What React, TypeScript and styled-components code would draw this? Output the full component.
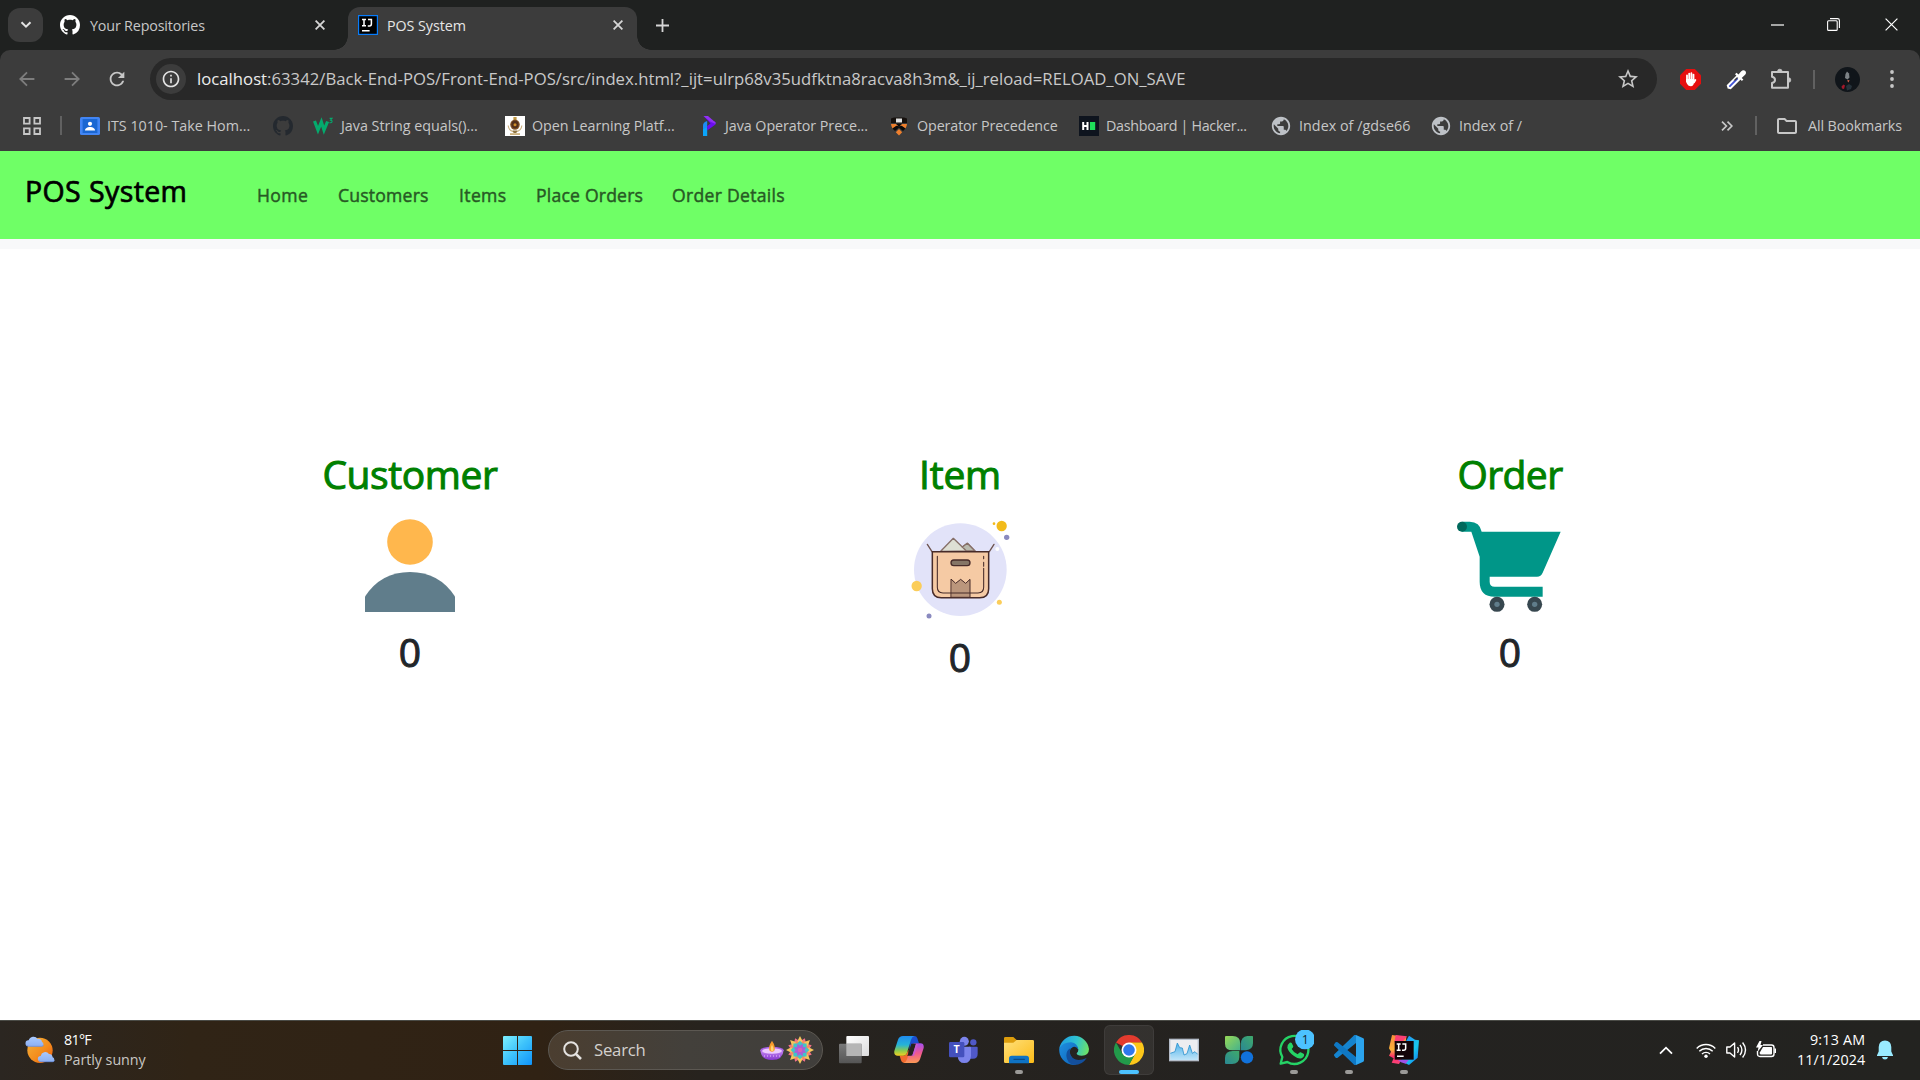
import React from "react";
import styled, { createGlobalStyle } from "styled-components";
import { MdPublic, MdStarOutline, MdRefresh, MdOutlineInfo, MdOutlineFolder } from "react-icons/md";

const GlobalStyle = createGlobalStyle`
  * { box-sizing: border-box; }
  html, body { margin: 0; padding: 0; }
  body { font-family: "Open Sans", "Noto Sans", sans-serif; background: #fff; overflow: hidden; }
  svg { display: block; flex: none; }
`;

const Screen = styled.div`
  width: 1920px;
  height: 1080px;
  display: flex;
  flex-direction: column;
  background: #fff;
`;

/* ---------- text ---------- */
const Label = styled.span<{ $w: number; $ls?: number; $size?: number; $color?: string; $drop?: number }>`
  flex: none;
  width: ${(p) => p.$w}px;
  padding-top: ${(p) => p.$drop ?? 0}px;
  font-size: ${(p) => p.$size ?? 14.3}px;
  letter-spacing: ${(p) => p.$ls ?? 0}px;
  color: ${(p) => p.$color ?? "#c7c7c7"};
  white-space: nowrap;
  line-height: 20px;
`;

/* ---------- tab strip ---------- */
const TabStrip = styled.div`
  height: 50px;
  flex: none;
  display: flex;
  align-items: flex-start;
  background: #1f2120;
`;
const TabSearch = styled.div`
  width: 35px;
  height: 34px;
  margin: 8px 5px 0 8px;
  border-radius: 12px;
  background: #3c3c3c;
  display: grid;
  place-items: center;
`;
const Tab = styled.div<{ $active?: boolean; $width: number }>`
  position: relative;
  width: ${(p) => p.$width}px;
  height: 43px;
  margin-top: 7px;
  padding: 0 12px 7px 10px;
  border-radius: 12px 12px 0 0;
  display: flex;
  align-items: center;
  background: ${(p) => (p.$active ? "#3c3c3c" : "transparent")};
  &::before,
  &::after {
    content: "";
    display: ${(p) => (p.$active ? "block" : "none")};
    position: absolute;
    bottom: 0;
    width: 14px;
    height: 14px;
  }
  &::before {
    left: -14px;
    background: radial-gradient(circle at 0 0, transparent 13.5px, #3c3c3c 14px);
  }
  &::after {
    right: -14px;
    background: radial-gradient(circle at 100% 0, transparent 13.5px, #3c3c3c 14px);
  }
`;
const TabIcon = styled.div<{ $indent?: number; $w?: number }>`
  width: ${(p) => p.$w ?? 30}px;
  padding-left: ${(p) => p.$indent ?? 0}px;
  flex: none;
`;
const Spacer = styled.div`
  flex: 1;
`;
const NewTab = styled.div`
  width: 50px;
  height: 50px;
  display: grid;
  place-items: center;
`;
const WindowButton = styled.div`
  width: 57px;
  height: 49px;
  display: grid;
  place-items: center;
`;

/* ---------- toolbar ---------- */
const ToolbarWrap = styled.div`
  flex: none;
  height: 101px;
  background: #1f2120;
`;
const ToolbarArea = styled.div`
  height: 101px;
  border-radius: 10px 10px 0 0;
  background: #3c3c3c;
`;
const Toolbar = styled.div`
  height: 58px;
  display: flex;
  align-items: center;
  padding-left: 4px;
`;
const NavButton = styled.div`
  width: 45px;
  flex: none;
  display: grid;
  place-items: center;
`;
const Omnibox = styled.div`
  flex: none;
  width: 1507px;
  height: 42px;
  margin-left: 11px;
  padding: 0 17px 0 6px;
  border-radius: 21px;
  background: #282828;
  display: flex;
  align-items: center;
  & > span b {
    font-weight: 400;
    color: #ececec;
  }
`;
const SiteInfo = styled.div`
  width: 30px;
  height: 30px;
  margin-right: 11px;
  border-radius: 50%;
  background: #3c3c3c;
  display: grid;
  place-items: center;
`;
const Extensions = styled.div`
  flex: 1;
  display: flex;
  align-items: center;
  padding-left: 21px;
`;
const Ext = styled.div<{ $w: number }>`
  width: ${(p) => p.$w}px;
  flex: none;
  display: flex;
  justify-content: center;
`;
const MenuDots = styled.div`
  margin-left: 30px;
`;
const Divider = styled.div`
  width: 2px;
  height: 19px;
  flex: none;
  background: #616161;
`;

const BookmarkBar = styled.div`
  height: 43px;
  padding: 0 19px 8px 23px;
  display: flex;
  align-items: center;
`;
const Bookmark = styled.div<{ $gap?: number }>`
  display: flex;
  align-items: center;
  margin-right: ${(p) => p.$gap ?? 0}px;
`;
const BookmarkIcon = styled.div<{ $w?: number }>`
  width: ${(p) => p.$w ?? 27}px;
  flex: none;
`;

/* ---------- web page ---------- */
const NavBar = styled.nav`
  flex: none;
  height: 98px;
  padding: 0 0 10px 25px;
  border-bottom: 10px solid #f8f9fa;
  background: #6fff66;
  display: flex;
  align-items: flex-start;
`;
const Brand = styled.div`
  width: 232px;
  padding-top: 21px;
  font-size: 28.5px;
  line-height: 38px;
  letter-spacing: 0.4px;
  color: #000;
  -webkit-text-stroke: 0.7px #000;
  white-space: nowrap;
`;
const NavLink = styled.div<{ $w: number; $ls?: number }>`
  width: ${(p) => p.$w}px;
  margin-right: 30px;
  padding-top: 31px;
  font-size: 17.6px;
  line-height: 26px;
  letter-spacing: ${(p) => p.$ls ?? 0}px;
  color: #275924;
  -webkit-text-stroke: 0.45px #275924;
  white-space: nowrap;
`;
const Dashboard = styled.main`
  flex: 1;
  padding: 200px 135px 0;
  display: grid;
  grid-template-columns: repeat(3, 550px);
  align-items: start;
`;
const Card = styled.section`
  display: flex;
  flex-direction: column;
  align-items: center;
`;
const CardTitle = styled.h1<{ $ls?: number }>`
  margin: 0;
  padding-top: 1px;
  font-size: 39px;
  font-weight: 400;
  line-height: 48px;
  letter-spacing: ${(p) => p.$ls ?? 0}px;
  color: #008000;
  -webkit-text-stroke: 1px #008000;
`;
const CardFigure = styled.div<{ $h: number; $top?: number }>`
  height: ${(p) => p.$h}px;
  margin-top: 21px;
  padding-top: ${(p) => p.$top ?? 0}px;
`;
const CardCount = styled.div`
  margin-top: 9px;
  font-size: 39px;
  line-height: 48px;
  color: #212529;
  -webkit-text-stroke: 1px #212529;
`;

/* ---------- taskbar ---------- */
const TaskBar = styled.footer`
  height: 60px;
  flex: none;
  padding-bottom: 1px;
  display: flex;
  align-items: center;
  border-top: 1px solid #4a4b46;
  background: linear-gradient(90deg, #2b2621 0, #302416 190px, #302214 540px, #27231e 700px, #242220 1250px, #232320 1920px);
`;
const Weather = styled.div`
  width: 487px;
  flex: none;
  padding-left: 24px;
  display: flex;
  align-items: center;
  gap: 8px;
`;
const Stack = styled.div<{ $right?: boolean }>`
  display: flex;
  flex-direction: column;
  align-items: ${(p) => (p.$right ? "flex-end" : "flex-start")};
  padding-bottom: 1px;
`;
const AppSlot = styled.div<{ $active?: boolean; $dot?: boolean }>`
  position: relative;
  width: 50px;
  height: 50px;
  flex: none;
  margin-right: 5px;
  border-radius: 6px;
  display: grid;
  place-items: center;
  background: ${(p) => (p.$active ? "rgba(255,255,255,0.07)" : "transparent")};
  border: 1px solid ${(p) => (p.$active ? "rgba(255,255,255,0.06)" : "transparent")};
  &::after {
    content: "";
    display: ${(p) => (p.$active || p.$dot ? "block" : "none")};
    position: absolute;
    left: 50%;
    bottom: 0;
    width: ${(p) => (p.$active ? 20 : 8)}px;
    height: 4px;
    border-radius: 2px;
    transform: translateX(-50%);
    background: ${(p) => (p.$active ? "#4cc2ff" : "#9b9a98")};
  }
`;
const StartSlot = styled(AppSlot)`
  width: 61px;
  margin-right: 0;
`;
const SearchPill = styled.div`
  flex: none;
  width: 275px;
  height: 40px;
  margin-right: 6px;
  padding: 0 8px 0 14px;
  border: 1px solid #5c5852;
  border-radius: 20px;
  background: linear-gradient(90deg, #4b3e30, #43403b 50%, #403e3b);
  display: flex;
  align-items: center;
`;
const SearchGlyph = styled.div`
  width: 31px;
`;
const Tray = styled.div`
  display: flex;
  align-items: center;
  margin-right: 27px;
`;
const TrayItem = styled.div<{ $gap: number }>`
  margin-right: ${(p) => p.$gap}px;
`;

/* ---------- icons ---------- */
const GitHub = ({ color }: { color: string }) => (
  <svg width="20" height="20" viewBox="0 0 16 16" fill={color}>
    <path d="M8 0C3.58 0 0 3.58 0 8c0 3.54 2.29 6.53 5.47 7.59.4.07.55-.17.55-.38 0-.19-.01-.82-.01-1.49-2.01.37-2.53-.49-2.69-.94-.09-.23-.48-.94-.82-1.13-.28-.15-.68-.52-.01-.53.63-.01 1.08.58 1.23.82.72 1.21 1.87.87 2.33.66.07-.52.28-.87.51-1.07-1.78-.2-3.64-.89-3.64-3.95 0-.87.31-1.59.82-2.15-.08-.2-.36-1.02.08-2.12 0 0 .67-.21 2.2.82.64-.18 1.32-.27 2-.27s1.36.09 2 .27c1.53-1.04 2.2-.82 2.2-.82.44 1.1.16 1.92.08 2.12.51.56.82 1.27.82 2.15 0 3.07-1.87 3.75-3.65 3.95.29.25.54.73.54 1.48 0 1.07-.01 1.93-.01 2.2 0 .21.15.46.55.38A8.01 8.01 0 0 0 16 8c0-4.42-3.58-8-8-8z" />
  </svg>
);
const Cross = ({ size = 10, w = 1.8, color = "#d6d6d6" }: { size?: number; w?: number; color?: string }) => (
  <svg width={size} height={size} viewBox={`0 0 ${size} ${size}`} stroke={color} strokeWidth={w}>
    <path d={`M.6 .6L${size - 0.6} ${size - 0.6}M${size - 0.6} .6L.6 ${size - 0.6}`} />
  </svg>
);
const Arrow = ({ flip }: { flip?: boolean }) => (
  <svg width="16" height="16" viewBox="0 0 16 16" fill="none" stroke="#7d7d7d" strokeWidth="1.8" transform={flip ? "scale(-1 1)" : undefined}>
    <path d="M15.4 8H1.6M8 1.3L1.3 8L8 14.7" />
  </svg>
);
const JetBrainsTab = () => (
  <svg width="20" height="20" viewBox="0 0 20 20">
    <rect x=".6" y=".6" width="18.8" height="18.8" fill="#000" stroke="#087cfa" strokeWidth="1.2" />
    <g stroke="#fff" strokeWidth="1.5" fill="none">
      <path d="M4 4.6h4M6 4.6v6M4 10.8h4M10 4.6h3.4v4.4q0 1.9-1.8 1.9H9.8M4 15.8h7.6" />
    </g>
  </svg>
);
const AppsGrid = () => (
  <svg width="18" height="18" viewBox="0 0 18 18" fill="none" stroke="#c7c7c7" strokeWidth="1.8">
    <path d="M1 1h5.6v5.6H1zM11.4 1H17v5.6h-5.6zM1 11.4h5.6V17H1zM11.4 11.4H17V17h-5.6z" />
  </svg>
);
const Classroom = () => (
  <svg width="20" height="20" viewBox="0 0 20 20">
    <rect y="1" width="20" height="18" rx="1.6" fill="#4285f4" />
    <rect x="2.6" y="3" width="14.8" height="14" fill="#1a67d2" />
    <circle cx="10" cy="7.8" r="2.1" fill="#fff" />
    <path d="M5 14.6c0-2.6 2.3-3.7 5-3.7s5 1.1 5 3.7z" fill="#fff" />
  </svg>
);
const W3 = () => (
  <svg width="20" height="20" viewBox="0 0 20 20" fill="none" stroke="#04aa6d">
    <path d="M1.5 5L5 14.2L8.4 6L11 14.2L14.6 5.5" strokeWidth="3.2" />
    <path d="M16.6 2.4h2.4l-1.5 1.8q1.8.2 1.5 1.6q-.4 1.3-2.6.9" strokeWidth="1.1" />
  </svg>
);
const Crest = () => (
  <svg width="20" height="20" viewBox="0 0 20 20">
    <rect width="20" height="20" fill="#fff" />
    <path d="M8.4 1h3.2v3H8.4z" fill="#c29a45" />
    <path d="M3.2 9.5Q3.500 15 10 16Q16.500 15 16.800 9.500" fill="none" stroke="#cdb382" strokeWidth="1.2" />
    <ellipse cx="10" cy="8.600" rx="4.800" ry="5.200" fill="#8a5a2c" />
    <ellipse cx="10" cy="8.600" rx="3.600" ry="4" fill="#54301c" />
    <circle cx="10" cy="8.800" r="1.500" fill="#cf8f2a" />
    <path d="M7.500 14.500h5l-1.200 2.500h-2.600z" fill="#8f7440" />
    <path d="M5 17.200h10v1.800H5z" fill="#cdb27c" />
  </svg>
);
const Programiz = () => (
  <svg width="14" height="20" viewBox="0 0 14 20">
    <path d="M1 20V12.500L5.200 10V20z" fill="#0aa5fa" />
    <path d="M1 9.500Q1 6 5.200 5V11.500L1 13z" fill="#1c8cf5" />
    <path d="M1.500 0L13.500 6V8.500L5.200 14.500V10L8.500 7.500z" fill="#6a0df0" />
    <path d="M1.500 0H6L13.500 6.500V8L8 5.500z" fill="#9230f5" />
  </svg>
);
const Princeton = () => (
  <svg width="18" height="20" viewBox="0 0 18 20">
    <path d="M1 2.500L4 1.500H14L17 2.500V7H1z" fill="#15100d" />
    <path d="M6 2.500h6v4H6z" fill="#e0e0e0" />
    <path d="M1 8H6L9 10.800L12 8H17Q16.800 10.500 15.500 12.500L9 8L2.500 12.500Q1.200 10.500 1 8z" fill="#ee7f2d" />
    <path d="M6 7.500H12L9 11zM2.500 12.500L7 9.500L9 11L11 9.500L15.500 12.500L13 15L9 11.500L5 15z" fill="#0c0a09" />
    <path d="M9 13l3.200 3.200L9 19.500L5.800 16.200z" fill="#ee7f2d" />
  </svg>
);
const HackerRank = () => (
  <svg width="20" height="20" viewBox="0 0 20 20">
    <rect width="20" height="20" fill="#0e141e" />
    <path d="M4.2 6v8M8.5 6v8M4.2 10h4.3" stroke="#fff" strokeWidth="2" />
    <rect x="11" y="6" width="5.2" height="8" fill="#1fe05a" />
  </svg>
);
const AdBlock = () => (
  <svg width="21" height="21" viewBox="0 0 21 21">
    <path d="M6.2 0h8.6L21 6.2v8.6L14.8 21H6.2L0 14.8V6.2z" fill="#e60f0f" />
    <g stroke="#fff" strokeWidth="1.8" strokeLinecap="round" fill="none">
      <path d="M7 6.3v6M9.2 4.6v7M11.4 4.2v7M13.5 5.6v7" />
      <path d="M15.4 11l-1.5 2.5" />
    </g>
    <path d="M6.1 10h8.3v2.5l-1 3.2q-1 1.6-2.6 1.6q-2.4 0-3.7-2.3q-1-1.7-1-3z" fill="#fff" />
  </svg>
);
const Picker = () => (
  <svg width="21" height="21" viewBox="0 0 21 21">
    <path d="M2.4 18.6L1.8 16.5L11 7.3L13.7 10L4.5 19.2z" fill="#3f51d5" stroke="#fff" strokeWidth="2" />
    <path d="M7.5 11.5L10.5 8.5L12.5 8.5L9.5 11.500z" fill="#3a3a3a" />
    <path d="M9 5.2L10.5 3.7L12.5 5.5L15 2.6Q17.2 .3 19.3 1.9Q21 4 18.6 6.3L15.7 8.9L17.4 10.6L15.9 12.1z" fill="#fff" />
  </svg>
);
const Puzzle = () => (
  <svg width="22" height="22" viewBox="0 0 22 22" fill="none" stroke="#c7c7c7" strokeWidth="2" strokeLinejoin="round">
    <path d="M2 4H18V19.8H2V15Q5 14.3 5 11.9Q5 9.5 2 8.8z" />
    <path d="M7.5 3.5a2.3 2.3 0 0 1 4.6 0zM18.5 9.7a2.3 2.3 0 0 1 0 4.6z" fill="#c7c7c7" strokeWidth=".8" />
  </svg>
);
const Avatar = () => (
  <svg width="25" height="25" viewBox="0 0 25 25">
    <circle cx="12.5" cy="12.5" r="12.5" fill="#10151a" />
    <path d="M10.5 7L12 4.5L14 6.500L14.500 10.500L12.500 12.500L10 11z" fill="#7d8387" />
    <path d="M12 13.5l2.5-.5l-1 2.5z" fill="#d9644a" />
    <path d="M6.5 19.5l2-2l1.5 1l-1 3.5l-2-.5z" fill="#a3182a" />
    <path d="M11 19l3-2l3 2l-1 3l-4 1.5z" fill="#26323a" />
  </svg>
);

const PersonFigure = () => (
  <svg width="90" height="93" viewBox="0 0 90 93">
    <circle cx="45" cy="23" r="22.8" fill="#ffb74d" />
    <path d="M0 93V77.5Q16 53 45 53T90 77.5V93z" fill="#607d8b" />
  </svg>
);
const BoxFigure = () => (
  <svg width="100" height="100" viewBox="0 0 300 300">
    <circle cx="151" cy="152" r="139" fill="#e2e3f9" />
    <circle cx="275" cy="21" r="15.5" fill="#f2bb1b" />
    <circle cx="252" cy="14" r="4" fill="#f2bb1b" />
    <circle cx="290" cy="55" r="8" fill="#8a8abf" />
    <circle cx="262" cy="90" r="6" fill="#fff" />
    <circle cx="20" cy="201" r="15.5" fill="#fbcd59" />
    <circle cx="268" cy="250" r="7.5" fill="#fbcd59" />
    <circle cx="57" cy="291" r="7.5" fill="#8a8abf" />
    <g stroke="#472b29" strokeLinejoin="round" strokeLinecap="round">
      <path d="M92 97L130 58L157 84L172 73L195 96z" fill="#dedfd4" stroke="#866f68" strokeWidth="4" />
      <path d="M157 84L172 73L195 96H169z" fill="#b9baae" stroke="#866f68" strokeWidth="4" />
      <path d="M66 98L52 76M238 98L252 76" fill="none" strokeWidth="4" stroke="#6e5450" />
      <path d="M67 98H236V209Q236 236 209 236H94Q67 236 67 209z" fill="#f5caa4" strokeWidth="4.5" />
      <path d="M124 181L137 193L152 181L167 193L180 181V235H124z" fill="#bb967c" strokeWidth="3" />
      <path d="M82 112V205Q82 222 99 222H204Q221 222 221 205V148M221 142V130M221 119V112" fill="none" strokeWidth="3.2" />
      <rect x="123" y="123" width="57" height="17" rx="8.5" fill="#857566" strokeWidth="4" />
    </g>
  </svg>
);
const CartFigure = () => (
  <svg width="106" height="92" viewBox="0 0 318 276">
    <path d="M14 5H38Q68 5 74 35H311L257 158Q252 170 240 170H98V185Q98 200 113 200H257V230H113Q68 230 68 185V110L43 35H14z" fill="#009688" />
    <circle cx="15" cy="20" r="15" fill="#00695c" />
    <g fill="#37474f">
      <circle cx="120" cy="253" r="22.5" />
      <circle cx="233" cy="253" r="22.5" />
    </g>
    <g fill="#607d8b">
      <circle cx="120" cy="253" r="8" />
      <circle cx="233" cy="253" r="8" />
    </g>
  </svg>
);

const WeatherIcon = () => (
  <svg width="32" height="32" viewBox="0 0 96 96">
    <defs>
      <linearGradient id="sun" x1="0" y1="0" x2="1" y2="1">
        <stop offset="0" stopColor="#f3b23a" />
        <stop offset=".55" stopColor="#f48d1d" />
        <stop offset="1" stopColor="#ea5a10" />
      </linearGradient>
      <linearGradient id="cloud" x1="0" y1="0" x2="0" y2="1">
        <stop offset="0" stopColor="#a9c9ff" />
        <stop offset="1" stopColor="#8db0f2" />
      </linearGradient>
    </defs>
    <circle cx="48" cy="49" r="38" fill="url(#sun)" />
    <path d="M13 37a9 9 0 0 1 1-18a15 15 0 0 1 27-4a10 10 0 0 1 13 9a7 7 0 0 1 0 13z" fill="url(#cloud)" />
    <path d="M50 83a8.5 8.5 0 0 1 0-17a14 14 0 0 1 25-6a11 11 0 0 1 11 10a7 7 0 0 1 1 13z" fill="url(#cloud)" />
    <path d="M8 34q4 3 8 3h38q4-1 5-4M45 80q3 3 7 3h35q4-1 5-4" fill="none" stroke="#6e90e0" strokeWidth="2.5" />
  </svg>
);
const StartIcon = () => (
  <svg width="29" height="29" viewBox="0 0 29 29">
    <defs>
      <linearGradient id="win" gradientUnits="userSpaceOnUse" x1="0" y1="0" x2="29" y2="29">
        <stop offset="0" stopColor="#7df0ff" />
        <stop offset=".5" stopColor="#3dc2fb" />
        <stop offset="1" stopColor="#0f93fb" />
      </linearGradient>
    </defs>
    <path d="M1 0H14V14H0V1Q0 0 1 0zM15 0H28Q29 0 29 1V14H15zM0 15H14V29H1Q0 29 0 28zM15 15H29V28Q29 29 28 29H15z" fill="url(#win)" />
  </svg>
);
const Diya = () => (
  <svg width="24" height="24" viewBox="0 0 72 72">
    <defs>
      <linearGradient id="bowl" x1="0" y1="0" x2="0" y2="1">
        <stop offset="0" stopColor="#c88bf5" />
        <stop offset="1" stopColor="#8636cf" />
      </linearGradient>
    </defs>
    <path d="M1 36Q3 66 36 66T71 36z" fill="url(#bowl)" />
    <ellipse cx="36" cy="36" rx="35" ry="10" fill="#a862e6" />
    <ellipse cx="36" cy="39" rx="30" ry="8" fill="#ecc9ff" />
    <path d="M36 8Q23 27 29 38Q36 44 43 38Q48 26 36 8z" fill="#f89a2c" />
    <path d="M36 20Q30 31 34 39H40Q43 30 36 20z" fill="#ffd873" />
    <path d="M12 54h48" stroke="#e9c7ff" strokeWidth="3" strokeDasharray="3 6" />
  </svg>
);
const star = (n: number, outer: number, inner: number, turn = 0) =>
  Array.from({ length: n * 2 }, (_, i) => {
    const a = (Math.PI * i) / n + turn;
    const r = i % 2 ? inner : outer;
    return `${(42 + r * Math.sin(a)).toFixed(1)},${(42 - r * Math.cos(a)).toFixed(1)}`;
  }).join(" ");
const Rangoli = () => (
  <svg width="28" height="28" viewBox="0 0 84 84">
    <polygon points={star(8, 38, 26, Math.PI / 8)} fill="#f07088" />
    <polygon points={star(8, 42, 25)} fill="#f6c55c" />
    <polygon points={star(8, 30, 22, Math.PI / 8)} fill="#f58a62" />
    <polygon points={star(8, 28, 21)} fill="#3fc5c9" />
    <polygon points={star(8, 20, 13, Math.PI / 8)} fill="#a75fd6" />
    <circle cx="42" cy="42" r="7" fill="#d95fb8" />
  </svg>
);
const TaskView = () => (
  <svg width="30" height="30" viewBox="0 0 90 90">
    <defs>
      <linearGradient id="tvf" x1="0" y1="0" x2="1" y2="1">
        <stop offset="0" stopColor="#fff" />
        <stop offset="1" stopColor="#dcdcdc" />
      </linearGradient>
      <linearGradient id="tvb" x1="0" y1="0" x2="0" y2="1">
        <stop offset="0" stopColor="#7a7a7a" />
        <stop offset="1" stopColor="#555" />
      </linearGradient>
    </defs>
    <rect x="22" y="3" width="68" height="60" rx="3" fill="url(#tvf)" />
    <rect x="0" y="26" width="68" height="59" rx="3" fill="url(#tvb)" />
    <path d="M22 26H68V63H22z" fill="#b5b5b5" />
  </svg>
);
const Copilot = () => (
  <svg width="30" height="30" viewBox="0 0 90 90">
    <defs>
      <linearGradient id="cpA" x1="0" y1="0" x2="0" y2="1">
        <stop offset="0" stopColor="#1f8cf0" />
        <stop offset=".45" stopColor="#26b3d8" />
        <stop offset=".75" stopColor="#8ccb4b" />
        <stop offset="1" stopColor="#f4cf22" />
      </linearGradient>
      <linearGradient id="cpB" x1="0" y1="0" x2="0" y2="1">
        <stop offset="0" stopColor="#a44ff0" />
        <stop offset=".5" stopColor="#f0588f" />
        <stop offset="1" stopColor="#fb9a55" />
      </linearGradient>
    </defs>
    <path d="M45 3H61Q68 3 70 10L75 25H62Q54 25 51 34L47 45z" fill="#1b4fd0" />
    <path d="M45 84H30Q23 84 21 76L17 62H28Q36 62 39 53L43 44z" fill="#f26b2e" />
    <path d="M27 3H61Q54 5 51 14L39 53Q36 62 27 62H11Q-1 62 1 48L12 14Q16 3 27 3z" fill="url(#cpA)" />
    <path d="M63 84H29Q36 82 39 73L51 34Q54 25 63 25H79Q91 25 89 39L78 73Q74 84 63 84z" fill="url(#cpB)" />
    <path d="M52 26H66L56 62H39Q42 60 43 54z" fill="#27231e" />
    <path d="M66 26L56 58L52 62H60L72 28z" fill="#c95ad0" />
  </svg>
);
const Teams = () => (
  <svg width="30" height="30" viewBox="0 0 90 90">
    <circle cx="73" cy="22" r="9.5" fill="#5059c9" />
    <path d="M60 35H83Q86 35 86 38V56Q86 71 72 71H60z" fill="#5059c9" />
    <circle cx="46" cy="19" r="13.5" fill="#7b83eb" />
    <path d="M28 35H63Q66 35 66 38V62Q65 84 46 84T26 62z" fill="#7b83eb" />
    <rect x="0" y="21" width="46" height="46" rx="4" fill="#4450bd" />
    <text x="23" y="55" textAnchor="middle" fontSize="32" fontWeight="700" fill="#fff">T</text>
  </svg>
);
const Explorer = () => (
  <svg width="30" height="30" viewBox="0 0 90 90">
    <defs>
      <linearGradient id="fold" x1="0" y1="0" x2="1" y2="1">
        <stop offset="0" stopColor="#ffe07a" />
        <stop offset="1" stopColor="#fcbb18" />
      </linearGradient>
    </defs>
    <path d="M0 10Q0 6 4 6H28L38 15H84V30H0z" fill="#dd9d0c" />
    <path d="M0 23H28L38 15H86Q90 15 90 19V80Q90 84 86 84H4Q0 84 0 80z" fill="url(#fold)" />
    <path d="M15 85V70Q15 62 23 62H67Q75 62 75 70V85z" fill="#0f73c4" />
    <rect x="28" y="71" width="35" height="4" rx="2" fill="#0a4b87" />
  </svg>
);
const Edge = () => (
  <svg width="30" height="30" viewBox="0 0 90 90">
    <defs>
      <linearGradient id="edA" x1="0" y1=".3" x2="1" y2=".5">
        <stop offset="0" stopColor="#1f9de4" />
        <stop offset=".55" stopColor="#2fc3cf" />
        <stop offset="1" stopColor="#6be06a" />
      </linearGradient>
      <linearGradient id="edB" x1="0" y1="0" x2="1" y2="1">
        <stop offset="0" stopColor="#1f8fe0" />
        <stop offset="1" stopColor="#0c62b8" />
      </linearGradient>
    </defs>
    <path d="M1 40A45 45 0 0 1 90 42Q90 62 68 62Q53 62 53 55Q58 50 58 44Q56 31 40 30Q16 28 1 40z" fill="url(#edA)" />
    <path d="M1 40Q12 21 37 22Q55 24 58 44Q52 33 42 36Q33 40 32 50Q32 72 60 78Q52 90 44 90A45 45 0 0 1 1 40z" fill="url(#edB)" />
    <path d="M34 40Q29 58 42 70Q58 80 83 69Q70 90 46 90Q24 86 22 62Q22 46 34 40z" fill="#134f9c" />
  </svg>
);
const Chrome = () => (
  <svg width="30" height="30" viewBox="0 0 90 90">
    <path d="M6 22.5A45 45 0 0 1 84 22.5L45 24L27 34z" fill="#e33b2e" />
    <path d="M84 22.5A45 45 0 0 1 45 90L63.5 55.5Q69 40 60 29L45 22.5z" fill="#fdc71a" />
    <path d="M6 22.5A45 45 0 0 0 45 90L64 56L45 66Q30 64 25.5 56z" fill="#229a4a" />
    <circle cx="45" cy="45" r="22.5" fill="#fff" />
    <circle cx="45" cy="45" r="17.5" fill="#2f78ed" />
  </svg>
);
const Monitor = () => (
  <svg width="30" height="30" viewBox="0 0 90 90">
    <defs>
      <linearGradient id="wave" x1="0" y1="0" x2="0" y2="1">
        <stop offset="0" stopColor="#4fb2ea" />
        <stop offset="1" stopColor="#bfe4f8" />
      </linearGradient>
    </defs>
    <rect x="2" y="13" width="86" height="64" fill="#ededf0" stroke="#b4bcc8" strokeWidth="4" />
    <path d="M4 55L18 50L25 24L32 38L40 39L45 60L54 56L62 30L70 55L78 50L86 58V75H4z" fill="url(#wave)" />
    <path d="M4 55L18 50L25 24L32 38L40 39L45 60L54 56L62 30L70 55L78 50L86 58" fill="none" stroke="#2d93cf" strokeWidth="2.5" />
  </svg>
);
const Clover = () => (
  <svg width="30" height="30" viewBox="0 0 90 90">
    <defs>
      <linearGradient id="lf" x1="0" y1="0" x2="1" y2="1">
        <stop offset="0" stopColor="#97d957" />
        <stop offset="1" stopColor="#45b18c" />
      </linearGradient>
      <linearGradient id="lg" x1="1" y1="0" x2="0" y2="1">
        <stop offset="0" stopColor="#3fa96b" />
        <stop offset="1" stopColor="#2a8894" />
      </linearGradient>
    </defs>
    <path d="M6 3H26Q49 3 49 26V46H26Q3 46 3 26V6Q3 3 6 3z" fill="url(#lf)" />
    <path d="M85 3H70Q51 5 51 26V46H66Q87 44 87 24V5Q87 3 85 3z" fill="url(#lg)" />
    <path d="M6 87H24Q46 86 46 66V48H26Q3 48 3 69V84Q3 87 6 87z" fill="url(#lg)" />
    <circle cx="69" cy="67" r="18.5" fill="#1172dc" />
  </svg>
);
const WhatsApp = () => (
  <svg width="40" height="40" viewBox="0 0 120 120">
    <path d="M20 101L25 81A42 42 0 1 1 40 96z" fill="none" stroke="#25d366" strokeWidth="7" strokeLinejoin="round" />
    <path d="M47 38Q50 36 53 39L58 49Q58 52 53 57Q59 68 71 73Q77 66 80 67L90 72Q92 80 84 84Q76 89 60 78Q44 67 40 53Q40 43 47 38z" fill="#25d366" />
    <circle cx="93" cy="28" r="30" fill="#4cc2ff" />
    <text x="94" y="41" textAnchor="middle" fontSize="37" fill="#16242e">1</text>
  </svg>
);
const VSCode = () => (
  <svg width="30" height="30" viewBox="0 0 90 90">
    <path d="M66 0V24L11 68Q8 70 5 68L1 63Q-1 60 1 58L58 3Q61 -1 66 0z" fill="#1584cf" />
    <path d="M66 90V66L11 22Q8 20 5 22L1 27Q-1 30 1 32L58 87Q61 91 66 90z" fill="#0f78c4" />
    <path d="M66 0L88 10Q90 11 90 14V76Q90 79 88 80L66 90z" fill="#2ba4ee" />
  </svg>
);
const IntelliJ = () => (
  <svg width="30" height="30" viewBox="0 0 90 90">
    <defs>
      <linearGradient id="ijA" x1="0" y1="0" x2="0" y2="1">
        <stop offset="0" stopColor="#f98b3c" />
        <stop offset=".5" stopColor="#fbb03a" />
        <stop offset=".75" stopColor="#fb2f6b" />
        <stop offset="1" stopColor="#fb4477" />
      </linearGradient>
      <linearGradient id="ijB" x1="0" y1="0" x2="1" y2="1">
        <stop offset="0" stopColor="#2a7cf5" />
        <stop offset=".6" stopColor="#18c8ee" />
        <stop offset="1" stopColor="#136df0" />
      </linearGradient>
    </defs>
    <path d="M9 0L52 6L45 60L30 87L8 83L14 70L0 62L6 50L0 40z" fill="url(#ijA)" />
    <path d="M20 0L54 4L40 22H16z" fill="#fb3f74" />
    <path d="M60 2L78 14L90 16L86 68L60 90L36 78L50 20z" fill="url(#ijB)" />
    <path d="M26 74L60 74L50 86L36 82z" fill="#a052e8" />
    <rect x="17" y="18" width="57" height="56" fill="#120308" />
    <g stroke="#fff" strokeWidth="4.5" fill="none">
      <path d="M23 27h12M29 27v18M23 46h12M40 27h10v13q0 6-6 6h-5M24 64h20" />
    </g>
  </svg>
);

const Wifi = () => (
  <svg width="20" height="17" viewBox="0 0 20 17" fill="none" stroke="#fff" strokeWidth="1.4">
    <path d="M.7 6.4a13.2 13.2 0 0 1 18.6 0M3.3 9.2a9.5 9.5 0 0 1 13.4 0M6 12a5.7 5.7 0 0 1 8 0" />
    <circle cx="10" cy="14.3" r="1.7" fill="#fff" stroke="none" />
  </svg>
);
const Speaker = () => (
  <svg width="21" height="18" viewBox="0 0 21 18" fill="none" stroke="#fff" strokeWidth="1.4" strokeLinejoin="round">
    <path d="M.8 6H4L8.6 2V16L4 12H.8zM11.5 6.2q2 2.8 0 5.6M14 3.8q3.8 5.2 0 10.4M16.6 1.5q5.8 7.5 0 15" />
  </svg>
);
const Battery = () => (
  <svg width="21" height="18" viewBox="0 0 21 18">
    <path d="M7 4H15.5Q18 4 18 6.5V13Q18 15.5 15.5 15.5H4Q1.5 15.5 1.5 13V10" fill="none" stroke="#fff" strokeWidth="1.4" />
    <path d="M7 6H15.5Q16 6 16 7V12.8Q16 13.5 15 13.5H4.5L3.5 12z" fill="#fff" />
    <path d="M18.5 7.5H20V12H18.5z" fill="#fff" />
    <path d="M3.5 0L0 6.5H2.5L1.5 11L7 4H4.5L5.5 0z" fill="#fff" />
  </svg>
);
const Bell = () => (
  <svg width="16" height="20" viewBox="0 0 16 20" fill="#99ebff">
    <path d="M8 .5Q14 .5 14.3 7V11.5L16 15.3V16H0V15.3L1.7 11.5V7Q2 .5 8 .5zM5 17H11Q10.5 19.5 8 19.5T5 17z" />
  </svg>
);

export default function App() {
  return (
    <Screen>
      <GlobalStyle />
      <TabStrip>
        <TabSearch>
          <svg width="12" height="8" viewBox="0 0 12 8" fill="none" stroke="#e3e3e3" strokeWidth="2">
            <path d="M1.5 1.2L6 5.7L10.5 1.2" />
          </svg>
        </TabSearch>
        <Tab $width={300}>
          <TabIcon $indent={2} $w={32}>
            <GitHub color="#fff" />
          </TabIcon>
          <Label $w={225} $ls={-0.16} $drop={1}>Your Repositories</Label>
          <Cross />
        </Tab>
        <Tab $active $width={289}>
          <TabIcon $w={29}>
            <JetBrainsTab />
          </TabIcon>
          <Label $w={226} $ls={-0.05} $drop={1} $color="#e6e6e6">POS System</Label>
          <Cross />
        </Tab>
        <NewTab>
          <svg width="13" height="13" viewBox="0 0 13 13" stroke="#d6d6d6" strokeWidth="1.8">
            <path d="M6.5 0V13M0 6.5H13" />
          </svg>
        </NewTab>
        <Spacer />
        <WindowButton>
          <svg width="13" height="2" viewBox="0 0 13 2"><path d="M0 1H13" stroke="#fff" strokeWidth="1.2" /></svg>
        </WindowButton>
        <WindowButton>
          <svg width="15" height="13" viewBox="0 0 15 13" fill="none" stroke="#fff" strokeWidth="1.1">
            <rect x=".6" y="2.8" width="9.6" height="9.6" rx="1" />
            <path d="M3 .6H10.5Q12.4 .6 12.4 2.5V10" />
          </svg>
        </WindowButton>
        <WindowButton><Cross size={13} w={1.2} color="#fff" /></WindowButton>
      </TabStrip>

      <ToolbarWrap>
        <ToolbarArea>
          <Toolbar>
            <NavButton><Arrow /></NavButton>
            <NavButton><Arrow flip /></NavButton>
            <NavButton><MdRefresh size={22} color="#c7c7c7" /></NavButton>
            <Omnibox>
              <SiteInfo><MdOutlineInfo size={20} color="#e3e3e3" /></SiteInfo>
              <Label $w={1419} $size={16.7} $ls={0.02} $color="#c9c9c9">
                <b>localhost</b>:63342/Back-End-POS/Front-End-POS/src/index.html?_ijt=ulrp68v35udfktna8racva8h3m&amp;_ij_reload=RELOAD_ON_SAVE
              </Label>
              <MdStarOutline size={24} color="#c7c7c7" />
            </Omnibox>
            <Extensions>
              <Ext $w={24}><AdBlock /></Ext>
              <Ext $w={68}><Picker /></Ext>
              <Ext $w={22}><Puzzle /></Ext>
              <Ext $w={43}><Divider /></Ext>
              <Ext $w={25}><Avatar /></Ext>
              <MenuDots>
                <svg width="4" height="18" viewBox="0 0 4 18" fill="#c7c7c7">
                  <circle cx="2" cy="2" r="1.9" /><circle cx="2" cy="9" r="1.9" /><circle cx="2" cy="16" r="1.9" />
                </svg>
              </MenuDots>
            </Extensions>
          </Toolbar>
          <BookmarkBar>
            <Bookmark $gap={19}><AppsGrid /></Bookmark>
            <Bookmark $gap={18}><Divider /></Bookmark>
            <Bookmark $gap={23}>
              <BookmarkIcon><Classroom /></BookmarkIcon>
              <Label $w={143}>ITS 1010- Take Hom...</Label>
            </Bookmark>
            <Bookmark $gap={20}><GitHub color="#24292f" /></Bookmark>
            <Bookmark $gap={27}>
              <BookmarkIcon $w={28}><W3 /></BookmarkIcon>
              <Label $w={137}>Java String equals()...</Label>
            </Bookmark>
            <Bookmark $gap={27}>
              <BookmarkIcon><Crest /></BookmarkIcon>
              <Label $w={143} $ls={-0.04}>Open Learning Platf...</Label>
            </Bookmark>
            <Bookmark $gap={22}>
              <BookmarkIcon $w={23}><Programiz /></BookmarkIcon>
              <Label $w={143} $ls={-0.05}>Java Operator Prece...</Label>
            </Bookmark>
            <Bookmark $gap={22}>
              <BookmarkIcon><Princeton /></BookmarkIcon>
              <Label $w={140} $ls={-0.11}>Operator Precedence</Label>
            </Bookmark>
            <Bookmark $gap={23}>
              <BookmarkIcon><HackerRank /></BookmarkIcon>
              <Label $w={141} $ls={-0.3}>Dashboard | Hacker...</Label>
            </Bookmark>
            <Bookmark $gap={19}>
              <BookmarkIcon $w={29}><MdPublic size={22} color="#bdc1c6" /></BookmarkIcon>
              <Label $w={112} $ls={0.04}>Index of /gdse66</Label>
            </Bookmark>
            <Bookmark>
              <BookmarkIcon $w={29}><MdPublic size={22} color="#bdc1c6" /></BookmarkIcon>
              <Label $w={64}>Index of /</Label>
            </Bookmark>
            <Spacer />
            <Bookmark $gap={22}>
              <svg width="12" height="10" viewBox="0 0 12 10" fill="none" stroke="#c7c7c7" strokeWidth="1.7">
                <path d="M1 .6L5.4 5L1 9.4M6.5 .6L10.9 5L6.5 9.4" />
              </svg>
            </Bookmark>
            <Bookmark $gap={18}><Divider /></Bookmark>
            <Bookmark>
              <BookmarkIcon $w={33}><MdOutlineFolder size={24} color="#c7c7c7" /></BookmarkIcon>
              <Label $w={93} $ls={-0.1}>All Bookmarks</Label>
            </Bookmark>
          </BookmarkBar>
        </ToolbarArea>
      </ToolbarWrap>

      <NavBar>
        <Brand>POS System</Brand>
        <NavLink $w={51} $ls={0.35}>Home</NavLink>
        <NavLink $w={91} $ls={0.2}>Customers</NavLink>
        <NavLink $w={47} $ls={0.35}>Items</NavLink>
        <NavLink $w={106} $ls={0.2}>Place Orders</NavLink>
        <NavLink $w={112} $ls={0.28}>Order Details</NavLink>
      </NavBar>

      <Dashboard>
        <Card>
          <CardTitle $ls={-0.4}>Customer</CardTitle>
          <CardFigure $h={100}><PersonFigure /></CardFigure>
          <CardCount>0</CardCount>
        </Card>
        <Card>
          <CardTitle $ls={-0.2}>Item</CardTitle>
          <CardFigure $h={105}><BoxFigure /></CardFigure>
          <CardCount>0</CardCount>
        </Card>
        <Card>
          <CardTitle $ls={-0.6}>Order</CardTitle>
          <CardFigure $h={100} $top={1}><CartFigure /></CardFigure>
          <CardCount>0</CardCount>
        </Card>
      </Dashboard>

      <TaskBar>
        <Weather>
          <WeatherIcon />
          <Stack>
            <Label $w={40} $ls={-0.7} $color="#fff">81°F</Label>
            <Label $w={90} $ls={-0.05} $color="#c9c7c4">Partly sunny</Label>
          </Stack>
        </Weather>
        <StartSlot><StartIcon /></StartSlot>
        <SearchPill>
          <SearchGlyph>
            <svg width="19" height="19" viewBox="0 0 19 19" fill="none" stroke="#e4e2e0" strokeWidth="2">
              <circle cx="8" cy="8" r="6.8" />
              <path d="M12.8 12.8L18 18" strokeWidth="2.6" />
            </svg>
          </SearchGlyph>
          <Label $w={166} $size={16.7} $ls={-0.2} $color="#d4d1ce">Search</Label>
          <Diya />
          <Spacer />
          <Rangoli />
        </SearchPill>
        <AppSlot><TaskView /></AppSlot>
        <AppSlot><Copilot /></AppSlot>
        <AppSlot><Teams /></AppSlot>
        <AppSlot $dot><Explorer /></AppSlot>
        <AppSlot><Edge /></AppSlot>
        <AppSlot $active><Chrome /></AppSlot>
        <AppSlot><Monitor /></AppSlot>
        <AppSlot><Clover /></AppSlot>
        <AppSlot $dot><WhatsApp /></AppSlot>
        <AppSlot $dot><VSCode /></AppSlot>
        <AppSlot $dot><IntelliJ /></AppSlot>
        <Spacer />
        <Tray>
          <TrayItem $gap={23}>
            <svg width="14" height="9" viewBox="0 0 14 9" fill="none" stroke="#fff" strokeWidth="1.8">
              <path d="M1 7.7L7 1.7L13 7.7" />
            </svg>
          </TrayItem>
          <TrayItem $gap={10}><Wifi /></TrayItem>
          <TrayItem $gap={9}><Speaker /></TrayItem>
          <TrayItem $gap={20}><Battery /></TrayItem>
          <TrayItem $gap={11}>
            <Stack $right>
              <Label $w={56} $ls={0.2} $color="#fff">9:13 AM</Label>
              <Label $w={69} $ls={0.05} $color="#fff">11/1/2024</Label>
            </Stack>
          </TrayItem>
          <Bell />
        </Tray>
      </TaskBar>
    </Screen>
  );
}
